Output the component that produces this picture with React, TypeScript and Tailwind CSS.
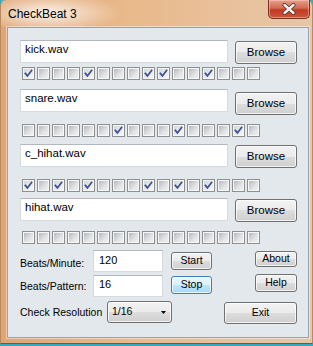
const font = "font-['Liberation_Sans',Arial,sans-serif]";

const tracks = [
  { file: 'kick.wav', on: [0, 4, 8, 9, 12], rowMt: 'mt-[12px]', btnMt: 'mt-[1px]', boxMt: 'mt-[3px]' },
  { file: 'snare.wav', on: [6, 10, 14], rowMt: 'mt-[9px]', btnMt: 'mt-[3px]', boxMt: 'mt-[9px]' },
  { file: 'c_hihat.wav', on: [0, 2, 4, 8, 10, 12], rowMt: 'mt-[7px]', btnMt: 'mt-[1px]', boxMt: 'mt-[11px]' },
  { file: 'hihat.wav', on: [], rowMt: 'mt-[6px]', btnMt: 'mt-[1px]', boxMt: 'mt-[9px]' },
];

function WinButton({ label, className = '', hot = false }: { label: string; className?: string; hot?: boolean }) {
  const skin = hot
    ? 'border-[#3c7fb1] bg-[linear-gradient(to_bottom,#eaf6fd_0%,#d9f0fc_50%,#bee6fd_50%,#a7d9f5_100%)]'
    : 'border-[#707070] bg-[linear-gradient(to_bottom,#f2f2f2_0%,#ebebeb_50%,#dddddd_50%,#cfcfcf_100%)]';
  return (
    <button
      type="button"
      className={`flex shrink-0 items-center justify-center rounded-[3px] border text-black shadow-[inset_0_0_0_1px_rgba(255,255,255,0.75)] ${skin} ${className}`}
    >
      {label}
    </button>
  );
}

function TextBox({ value, className = '' }: { value: string; className?: string }) {
  return (
    <div
      className={`shrink-0 border border-[#d5dae0] border-t-[#b3b8be] bg-white text-black ${className}`}
    >
      {value}
    </div>
  );
}

function CheckBox({ checked }: { checked: boolean }) {
  return (
    <div className="relative h-[13px] w-[13px] border border-[#8e8f8f] bg-[#f7f7f7] p-[1px]">
      <div
        className={`h-full w-full ${
          checked
            ? 'bg-[linear-gradient(135deg,#d4d7db,#f7f7f7)]'
            : 'bg-[linear-gradient(135deg,#b4b9bf,#e2e3e5_60%,#f0f0f0)]'
        }`}
      />
      {checked && (
        <svg className="absolute left-[1px] top-[1px] h-[9px] w-[9px]" viewBox="0 0 9 9" fill="none">
          <polyline points="1.3,4.4 3.4,6.9 7.6,1.4" stroke="#3a4e92" strokeWidth="1.7" strokeLinecap="square" />
        </svg>
      )}
    </div>
  );
}

export default function App() {
  return (
    <div className={`h-[346px] w-[313px] overflow-hidden bg-[#35a7be] ${font}`}>
      <div className="flex h-[344px] w-[313px] flex-col rounded-t-[6px] border-x border-b border-x-[#b98a5e] border-b-[#6e5847] bg-[linear-gradient(to_right,#dfa574,#e9b98a_40%,#e8c19c_75%,#e4c6a8)]">
        {/* title bar */}
        <div className="flex h-[27px] shrink-0 items-start bg-[radial-gradient(ellipse_75px_20px_at_45px_13px,rgba(255,255,255,0.85),rgba(255,255,255,0))] pl-[7px] pr-[2px]">
          <span className="mt-[7px] text-[12px] leading-[14px] text-black">CheckBeat 3</span>
          <button
            type="button"
            className="ml-auto flex h-[19px] w-[42px] items-center justify-center rounded-b-[5px] border border-t-0 border-[#7a2f22] bg-[linear-gradient(to_bottom,#e3a08c_0%,#d36a50_45%,#c03b24_55%,#cf5539_100%)] shadow-[inset_0_0_0_1px_rgba(255,220,210,0.45)]"
          >
            <svg width="14" height="12" viewBox="0 0 14 12">
              <path d="M2.5 2 L11.5 10 M11.5 2 L2.5 10" stroke="#5a2a22" strokeWidth="4" strokeLinecap="round" />
              <path d="M2.5 2 L11.5 10 M11.5 2 L2.5 10" stroke="#f4f4f4" strokeWidth="2.4" strokeLinecap="round" />
            </svg>
          </button>
        </div>

        {/* client area */}
        <div className="flex-1 pb-[5px] pl-[6px] pr-[3px]">
          <div className="flex h-full flex-col border border-[#98a2ad] bg-[#e3e8ed] pl-[12px] shadow-[0_0_0_1px_rgba(255,255,255,0.45)]">
            {tracks.map((t) => (
              <div key={t.file} className="flex flex-col">
                <div className={`flex items-start ${t.rowMt}`}>
                  <TextBox value={t.file} className="h-[23px] w-[208px] pl-[4px] pt-[2px] text-[11.5px] leading-[13px]" />
                  <WinButton label="Browse" className={`ml-[7px] h-[23px] w-[62px] text-[11.5px] ${t.btnMt}`} />
                </div>
                <div className={`ml-[2px] flex gap-[2px] ${t.boxMt}`}>
                  {Array.from({ length: 16 }, (_, i) => (
                    <CheckBox key={i} checked={t.on.includes(i)} />
                  ))}
                </div>
              </div>
            ))}

            <div className="mt-[6px] flex items-start">
              <span className="mt-[7px] w-[73px] text-[10.5px] leading-[12px] text-black">Beats/Minute:</span>
              <TextBox value="120" className="h-[22px] w-[70px] pl-[5px] pt-[3px] text-[11px] leading-[13px]" />
              <WinButton label="Start" className="ml-[8px] mt-[2px] h-[18px] w-[41px] text-[10.5px]" />
              <WinButton label="About" className="ml-[43px] mt-[1px] h-[16px] w-[42px] text-[10.5px]" />
            </div>

            <div className="mt-[2px] flex items-start">
              <span className="mt-[6px] w-[73px] text-[10.5px] leading-[12px] text-black">Beats/Pattern:</span>
              <TextBox value="16" className="mt-[1px] h-[22px] w-[70px] pl-[5px] pt-[2px] text-[11px] leading-[13px]" />
              <WinButton label="Stop" hot className="ml-[8px] mt-[2px] h-[18px] w-[41px] text-[10.5px]" />
              <WinButton label="Help" className="ml-[43px] h-[18px] w-[42px] text-[10.5px]" />
            </div>

            <div className="mt-[4px] flex items-start">
              <span className="mt-[5px] w-[87px] text-[10.5px] leading-[12px] text-black">Check Resolution</span>
              <button
                type="button"
                className="flex h-[22px] w-[65px] shrink-0 items-center justify-between rounded-[3px] border border-[#707070] bg-[linear-gradient(to_bottom,#f2f2f2_0%,#ebebeb_50%,#dddddd_50%,#cfcfcf_100%)] pl-[4px] pr-[5px] text-[10.5px] text-black shadow-[inset_0_0_0_1px_rgba(255,255,255,0.75)]"
              >
                <span>1/16</span>
                <svg width="5" height="3" viewBox="0 0 5 3">
                  <polygon points="0,0 5,0 2.5,3" fill="#000" />
                </svg>
              </button>
              <WinButton label="Exit" className="ml-[52px] mt-[1px] h-[22px] w-[73px] text-[10.5px]" />
            </div>
          </div>
        </div>
      </div>
    </div>
  );
}
